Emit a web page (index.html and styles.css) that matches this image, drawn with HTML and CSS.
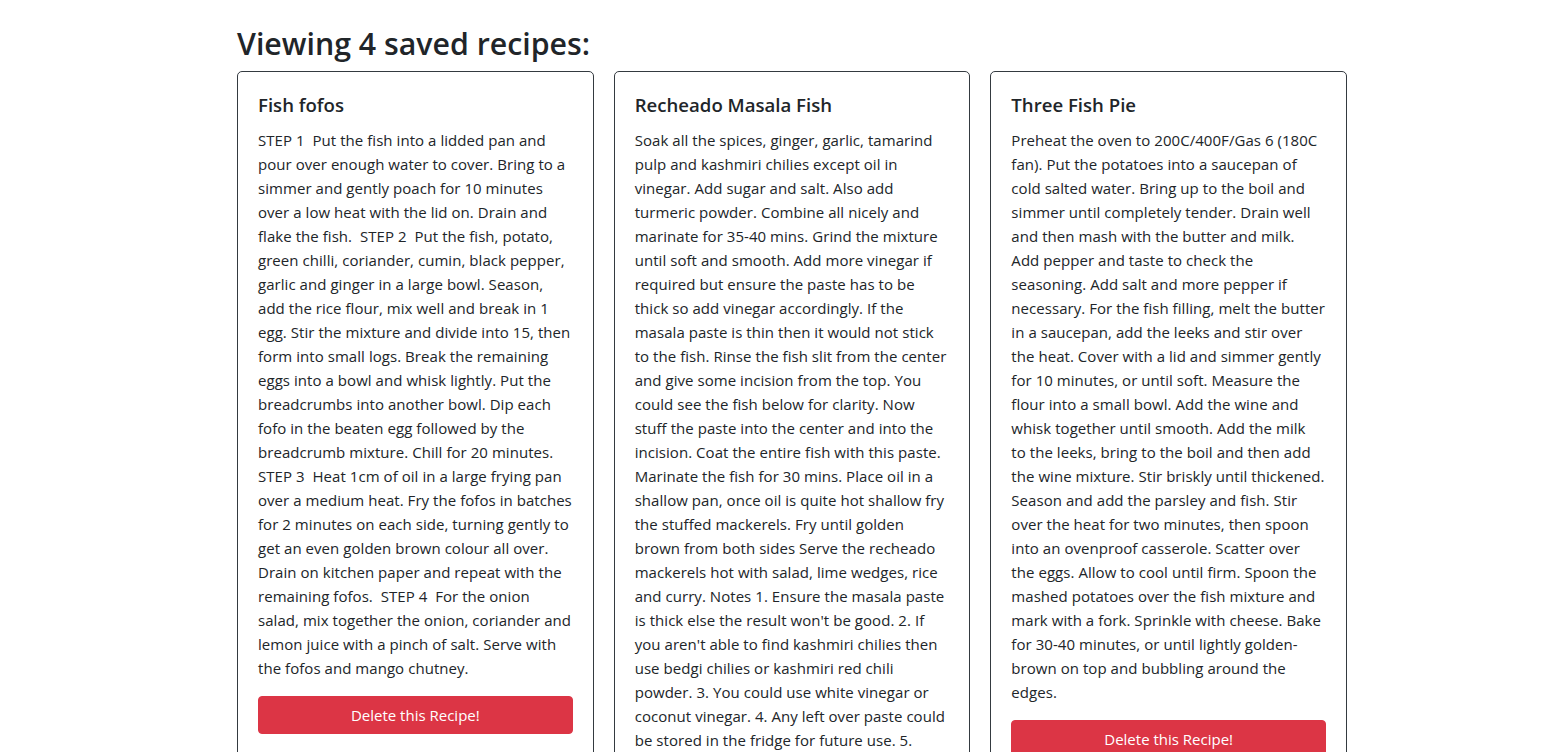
FILE: index.html
```html
<!DOCTYPE html>
<html lang="en">
<head>
<meta charset="utf-8">
<title>Saved recipes</title>
<link rel="stylesheet" href="styles.css">
</head>
<body>
<main class="page">
  <h2 class="page-title">Viewing 4 saved recipes:</h2>
  <div class="cards">
    <div class="card">
      <h5 class="card-title">Fish fofos</h5>
      <p class="card-text">STEP 1&nbsp; Put the fish into a lidded pan and pour over enough water to cover. Bring to a simmer and gently poach for 10 minutes over a low heat with the lid on. Drain and flake the fish.&nbsp; STEP 2&nbsp; Put the fish, potato, green chilli, coriander, cumin, black pepper, garlic and ginger in a large bowl. Season, add the rice flour, mix well and break in 1 egg. Stir the mixture and divide into 15, then form into small logs. Break the remaining eggs into a bowl and whisk lightly. Put the breadcrumbs into another bowl. Dip each fofo in the beaten egg followed by the breadcrumb mixture. Chill for 20 minutes. STEP 3&nbsp; Heat 1cm of oil in a large frying pan over a medium heat. Fry the fofos in batches for 2 minutes on each side, turning gently to get an even golden brown colour all over. Drain on kitchen paper and repeat with the remaining fofos.&nbsp; STEP 4&nbsp; For the onion salad, mix together the onion, coriander and lemon juice with a pinch of salt. Serve with the fofos and mango chutney.</p>
      <button class="btn-delete" type="button">Delete this Recipe!</button>
    </div>
    <div class="card">
      <h5 class="card-title">Recheado Masala Fish</h5>
      <p class="card-text">Soak all the spices, ginger, garlic, tamarind pulp and kashmiri chilies except oil in vinegar. Add sugar and salt. Also add turmeric powder. Combine all nicely and marinate for 35-40 mins. Grind the mixture until soft and smooth. Add more vinegar if required but ensure the paste has to be thick so add vinegar accordingly. If the masala paste is thin then it would not stick to the fish. Rinse the fish slit from the center and give some incision from the top. You could see the fish below for clarity. Now stuff the paste into the center and into the incision. Coat the entire fish with this paste. Marinate the fish for 30 mins. Place oil in a shallow pan, once oil is quite hot shallow fry the stuffed mackerels. Fry until golden brown from both sides Serve the recheado mackerels hot with salad, lime wedges, rice and curry. Notes 1. Ensure the masala paste is thick else the result won't be good. 2. If you aren't able to find kashmiri chilies then use bedgi chilies or kashmiri red chili powder. 3. You could use white vinegar or coconut vinegar. 4. Any left over paste could be stored in the fridge for future use. 5. Mackerels can be replaced with pomfret or any other fish of your choice.</p>
      <button class="btn-delete" type="button">Delete this Recipe!</button>
    </div>
    <div class="card">
      <h5 class="card-title">Three Fish Pie</h5>
      <p class="card-text">Preheat the oven to 200C/400F/Gas 6 (180C fan). Put the potatoes into a saucepan of cold salted water. Bring up to the boil and simmer until completely tender. Drain well and then mash with the butter and milk. Add pepper and taste to check the seasoning. Add salt and more pepper if necessary. For the fish filling, melt the butter in a saucepan, add the leeks and stir over the heat. Cover with a lid and simmer gently for 10 minutes, or until soft. Measure the flour into a small bowl. Add the wine and whisk together until smooth. Add the milk<br>to the leeks, bring to the boil and then add the wine mixture. Stir briskly until thickened. Season and add the parsley and fish. Stir over the heat for two minutes, then spoon into an ovenproof casserole. Scatter over the eggs. Allow to cool until firm. Spoon the mashed potatoes over the fish mixture and mark with a fork. Sprinkle with cheese. Bake for 30-40 minutes, or until lightly golden-brown on top and bubbling around the edges.</p>
      <button class="btn-delete" type="button">Delete this Recipe!</button>
    </div>
  </div>
</main>
</body>
</html>
```
FILE: styles.css
```css
* { box-sizing: border-box; }
html, body { margin: 0; padding: 0; }
body {
  background: #fff;
  color: #212529;
  font-family: "Open Sans", "Noto Sans", sans-serif;
  font-size: 15px;
  line-height: 24px;
}
.page {
  width: 1110px;
  margin-left: 237px;
  padding-top: 25px;
}
.page-title {
  margin: 0 0 8px;
  font-size: 30.3px;
  font-weight: 600;
  line-height: 38px;
}
.cards {
  display: flex;
  gap: 20px;
  align-items: stretch;
}
.card {
  flex: 1 1 0;
  border: 1px solid #343a40;
  border-radius: 5px;
  padding: 20px;
}
.card-title {
  margin: 0 0 12px;
  padding-top: 1px;
  font-size: 18.6px;
  font-weight: 600;
  line-height: 23px;
}
.card-text {
  margin: 0 0 16px;
  letter-spacing: 0.05px;
}
.btn-delete {
  display: block;
  width: 100%;
  background: #dc3545;
  color: #fff;
  border: 1px solid #dc3545;
  border-radius: 4px;
  padding: 6px 12px;
  font-family: inherit;
  font-size: 15px;
  line-height: 24px;
  text-align: center;
}
```
